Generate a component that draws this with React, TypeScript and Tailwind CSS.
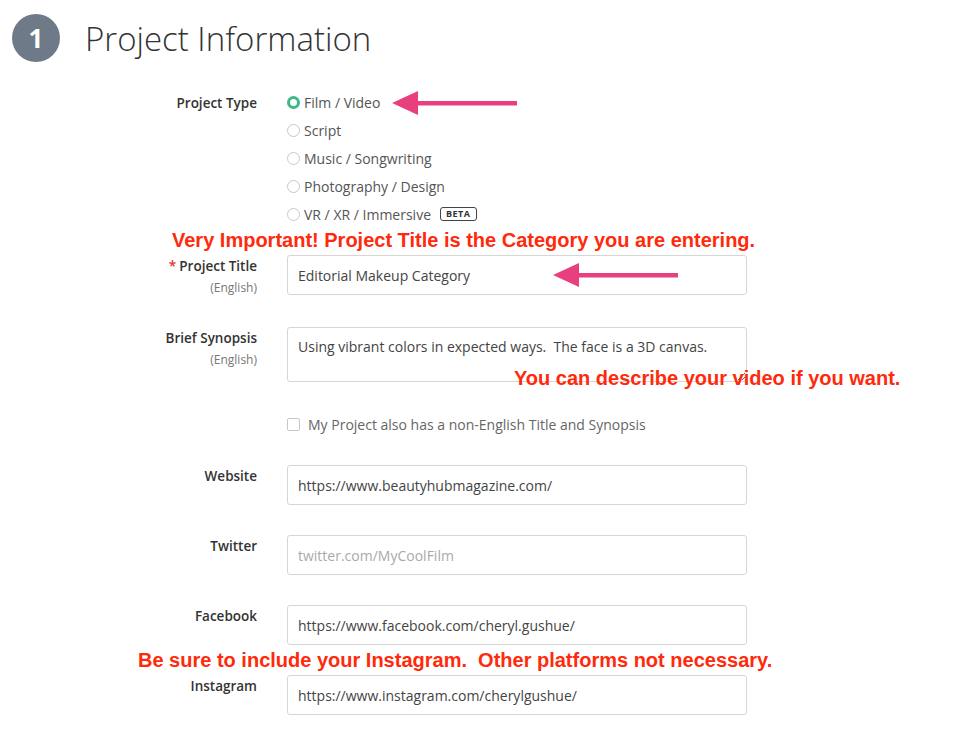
import React from "react";

const labelCol = "w-[257px] shrink-0 text-right text-[13.5px] font-semibold text-[#333] leading-5";
const fieldCls =
  "w-[460px] h-10 border border-[#d6d6d6] rounded-[3px] px-[10px] text-[14px] text-[#444] outline-none bg-white placeholder:text-[#aaa]";

const Arrow = ({ className }: { className: string }) => (
  <svg className={className} width="126" height="26" viewBox="0 0 126 26">
    <path d="M0 13 L26 1 L26 25 Z" fill="#e8407f" />
    <rect x="24" y="11" width="101" height="4.5" fill="#e8407f" />
  </svg>
);

const Row = ({
  label,
  sub,
  required,
  className,
  children,
}: {
  label: string;
  sub?: string;
  required?: boolean;
  className?: string;
  children: React.ReactNode;
}) => (
  <div className={`flex ${className ?? ""}`}>
    <div className={`${labelCol} pt-[1px]`}>
      <div>
        {required && <span className="text-[#e0342f] mr-[3px]">*</span>}
        {label}
      </div>
      {sub && <div className="text-[12px] font-normal text-[#777] mt-[4px] leading-[15px]">{sub}</div>}
    </div>
    <div className="ml-[30px]">{children}</div>
  </div>
);

const options = ["Film / Video", "Script", "Music / Songwriting", "Photography / Design", "VR / XR / Immersive"];

const redText = "font-['Liberation_Sans',Arial,sans-serif] font-bold text-[20px] text-[#ff2a0c] whitespace-pre";

export default function App() {
  return (
    <div className="relative w-[974px] h-[740px] bg-white overflow-hidden font-['Open_Sans',sans-serif]">
      {/* header */}
      <div className="flex items-center pl-[12px] pt-[14px]">
        <div className="w-12 h-12 rounded-full bg-[#6e7a87] flex items-center justify-center text-white text-[26px] font-bold">
          1
        </div>
        <h1 className="ml-[25px] text-[33px] font-light text-[#333] leading-none">Project Information</h1>
      </div>

      {/* project type */}
      <div className="flex mt-[26px]">
        <div className={`${labelCol} pt-[5px]`}>Project Type</div>
        <div className="ml-[30px] flex flex-col">
          {options.map((o, i) => (
            <div key={o} className="h-7 flex items-center text-[14px] text-[#555]">
              {i === 0 ? (
                <span className="w-[13px] h-[13px] rounded-full border-[3.5px] border-[#3cb985] bg-white" />
              ) : (
                <span className="w-[13px] h-[13px] rounded-full border border-[#c8c8c8] bg-white" />
              )}
              <span className="ml-[4px]">{o}</span>
              {i === 4 && (
                <span className="ml-[9px] border border-[#444] rounded-[3px] px-[5px] text-[9px] font-bold leading-[12px] tracking-[0.5px] text-[#333]">
                  BETA
                </span>
              )}
            </div>
          ))}
        </div>
      </div>

      <div className={`${redText} pl-[172px] leading-6 h-6`}>
        Very Important! Project Title is the Category you are entering.
      </div>

      <Row label="Project Title" sub="(English)" required className="mt-[3px]">
        <input className={fieldCls} readOnly defaultValue="Editorial Makeup Category" />
      </Row>

      <Row label="Brief Synopsis" sub="(English)" className="mt-[32px]">
        <textarea
          className="block w-[460px] h-[55px] border border-[#d6d6d6] rounded-[3px] px-[10px] pt-[9px] text-[14px] leading-5 text-[#444] outline-none whitespace-pre"
          readOnly
          defaultValue={"Using vibrant colors in expected ways.  The face is a 3D canvas."}
        />
      </Row>

      <div className="flex mt-[28px] h-7 items-center pl-[287px] text-[14px] text-[#666]">
        <span className="w-[13px] h-[13px] rounded-[2px] border border-[#c8c8c8] bg-white" />
        <span className="ml-[8px]">My Project also has a non-English Title and Synopsis</span>
      </div>

      <Row label="Website" className="mt-[27px]">
        <input className={fieldCls} readOnly defaultValue="https://www.beautyhubmagazine.com/" />
      </Row>
      <Row label="Twitter" className="mt-[30px]">
        <input className={fieldCls} readOnly placeholder="twitter.com/MyCoolFilm" />
      </Row>
      <Row label="Facebook" className="mt-[30px]">
        <input className={fieldCls} readOnly defaultValue="https://www.facebook.com/cheryl.gushue/" />
      </Row>

      <div className={`${redText} pl-[138px] leading-[30px] h-[30px]`}>
        {"Be sure to include your Instagram.  Other platforms not necessary."}
      </div>

      <Row label="Instagram">
        <input className={fieldCls} readOnly defaultValue="https://www.instagram.com/cherylgushue/" />
      </Row>

      {/* annotations */}
      <div className={`${redText} absolute left-[514px] top-[366px] leading-6`}>
        You can describe your video if you want.
      </div>
      <Arrow className="absolute left-[392px] top-[90px]" />
      <Arrow className="absolute left-[553px] top-[262px]" />
    </div>
  );
}
